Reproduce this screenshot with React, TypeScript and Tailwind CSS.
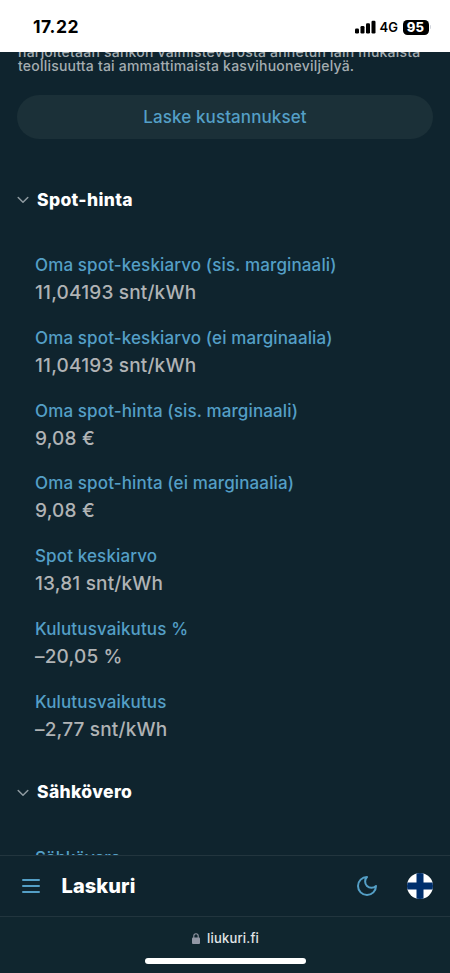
import React from "react";

type Entry = { label: string; value: string };

const entries: Entry[] = [
  { label: "Oma spot-keskiarvo (sis. marginaali)", value: "11,04193 snt/kWh" },
  { label: "Oma spot-keskiarvo (ei marginaalia)", value: "11,04193 snt/kWh" },
  { label: "Oma spot-hinta (sis. marginaali)", value: "9,08 €" },
  { label: "Oma spot-hinta (ei marginaalia)", value: "9,08 €" },
  { label: "Spot keskiarvo", value: "13,81 snt/kWh" },
  { label: "Kulutusvaikutus %", value: "–20,05 %" },
  { label: "Kulutusvaikutus", value: "–2,77 snt/kWh" },
];

function StatusBar() {
  return (
    <header className="flex h-[52px] shrink-0 items-center justify-between bg-white pr-[19px] pl-[33px] pt-[2px] text-black">
      <span className="text-[17.5px] leading-6 font-bold tracking-[0.5px]">17.22</span>
      <div className="flex items-center">
        <svg width="21" height="14" viewBox="0 0 21 14" fill="currentColor">
          <rect x="0" y="8.5" width="4" height="5" rx="1.2" />
          <rect x="5.5" y="6" width="4" height="7.5" rx="1.2" />
          <rect x="11" y="3.2" width="4" height="10.3" rx="1.2" />
          <rect x="16.5" y="0.7" width="4" height="12.8" rx="1.2" />
        </svg>
        <span className="ml-[4px] w-[19px] text-[13px] leading-4 font-semibold">4G</span>
        <span className="ml-[4px] flex h-[15px] w-[26px] items-center justify-center rounded-[4.5px] bg-black text-[13px] leading-[15px] font-extrabold tracking-[0.3px] text-white">
          95
        </span>
        <span className="ml-[1px] h-[4px] w-[1.5px] rounded-r bg-gray-300" />
      </div>
    </header>
  );
}

function SectionTitle({ children }: { children: React.ReactNode }) {
  return (
    <h2 className="flex h-6 items-center pl-[17px] text-[17.5px] font-extrabold tracking-[0.35px] text-white">
      <svg className="mr-[8px]" width="12" height="8" viewBox="0 0 12 8" fill="none" stroke="#8f9ba1" strokeWidth="1.5" strokeLinecap="round" strokeLinejoin="round">
        <path d="M1.2 1.5 6 6.3l4.8-4.8" />
      </svg>
      {children}
    </h2>
  );
}

function FinnishFlag() {
  return (
    <svg width="26" height="26" viewBox="0 0 26 26">
      <clipPath id="flag">
        <circle cx="13" cy="13" r="13" />
      </clipPath>
      <g clipPath="url(#flag)">
        <path fill="#fff" d="M0 0h26v26H0z" />
        <path fill="#002f6c" d="M9.5 0h7v26h-7zM0 9.5h26v7H0z" />
      </g>
    </svg>
  );
}

export default function App() {
  return (
    <div className="flex h-[973px] w-[450px] flex-col overflow-hidden bg-[#0f242e] font-['Inter','Liberation_Sans',sans-serif]">
      <StatusBar />
      <main className="min-h-0 flex-1 overflow-hidden">
        <p className="-mt-[7px] pl-[18px] text-[14px] leading-[14px] font-medium tracking-[0.21px] whitespace-nowrap text-[#a4adb1]">
          harjoitetaan sähkön valmisteverosta annetun lain mukaista
          <br />
          teollisuutta tai ammattimaista kasvihuoneviljelyä.
        </p>
        <button className="mx-[17px] mt-[22px] flex h-[44px] w-[416px] items-center justify-center rounded-full bg-[#1b3038] pt-[2px] text-[17px] font-medium tracking-[0.1px] text-[#549fc6]">
          Laske kustannukset
        </button>
        <div className="mt-[49px]">
          <SectionTitle>Spot-hinta</SectionTitle>
        </div>
        <dl className="mt-[40px] pl-[35px] whitespace-nowrap">
          {entries.map((entry) => (
            <div key={entry.label} className="h-[72.8px]">
              <dt className="text-[17px] leading-[26px] font-medium tracking-[0.13px] text-[#549fc6]">{entry.label}</dt>
              <dd className="text-[19px] leading-[30px] font-medium tracking-[0.18px] text-[#b0b3b5]">{entry.value}</dd>
            </div>
          ))}
        </dl>
        <div className="mt-[19px]">
          <SectionTitle>Sähkövero</SectionTitle>
        </div>
        <p className="mt-[40px] pl-[35px] text-[17px] leading-[26px] font-medium text-[#549fc6]">Sähkövero</p>
      </main>
      <nav className="flex h-[62px] shrink-0 items-center border-y border-[#22353e] pr-[17px] pl-[21.5px]">
        <svg width="18" height="14" viewBox="0 0 18 14" stroke="#549fc6" strokeWidth="2" strokeLinecap="round">
          <path d="M1 1h16M1 7h16M1 13h16" />
        </svg>
        <h1 className="ml-[22px] text-[20px] leading-6 font-extrabold tracking-[0.1px] text-white">Laskuri</h1>
        <svg className="ml-auto" width="24" height="24" viewBox="0 0 24 24" fill="none" stroke="#549fc6" strokeWidth="2" strokeLinecap="round" strokeLinejoin="round">
          <path d="M12 3a6 6 0 0 0 9 9 9 9 0 1 1-9-9Z" />
        </svg>
        <div className="ml-[28px]">
          <FinnishFlag />
        </div>
      </nav>
      <footer className="flex h-[56px] shrink-0 flex-col items-center bg-[#10262f] pt-[14px]">
        <div className="flex h-4 items-center pl-px text-[13px] font-medium tracking-[0.2px] text-[#e2e6e8]">
          <svg className="mr-[7px] mb-[2px]" width="8" height="11" viewBox="0 0 8 11">
            <rect y="4.6" width="8" height="6.4" rx="1" fill="#9297a5" />
            <path d="M1.8 5V3a2.2 2.2 0 0 1 4.4 0v2" fill="none" stroke="#9297a5" strokeWidth="1.1" />
          </svg>
          liukuri.fi
        </div>
        <div className="mt-[11px] h-[6px] w-[161px] rounded-full bg-white" />
      </footer>
    </div>
  );
}
